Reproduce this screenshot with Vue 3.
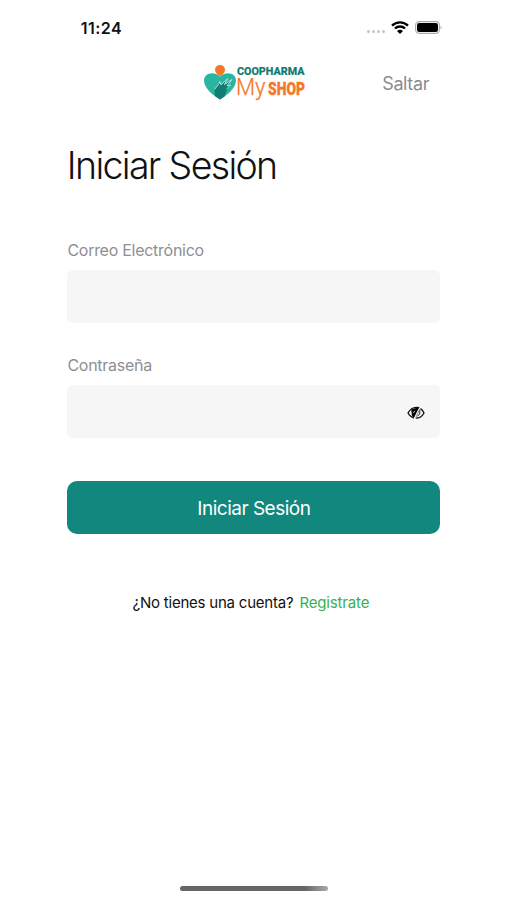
<script setup>
import { ref } from 'vue'

const email = ref('')
const password = ref('')
const hidden = ref(true)
</script>

<template>
  <main class="screen">
    <div class="status">
      <span class="time">11:24</span>
      <div class="indicators">
        <span class="dots"><i v-for="n in 4" :key="n"></i></span>
        <svg class="wifi" width="18" height="13" viewBox="0 0 18 13">
          <path d="M1 4.600C5.500.3 12.500.3 17 4.600M3.900 7.500c2.900-2.700 7.300-2.700 10.200 0" fill="none" stroke="#000" stroke-width="2.300" />
          <path d="M9 13 6 9.900c1.700-1.500 4.300-1.500 6 0z" fill="#000" />
        </svg>
        <svg class="battery" width="28" height="13" viewBox="0 0 28 13">
          <rect x=".6" y=".6" width="23.800" height="11.800" rx="3.600" fill="#fff" stroke="#aaa" stroke-width="1.100" />
          <rect x="2" y="2" width="21" height="9" rx="2.200" fill="#000" />
          <path d="M25.600 4.500q2 2 0 4z" fill="#aaa" />
        </svg>
      </div>
    </div>

    <header class="top">
      <svg class="logo" width="104" height="38" viewBox="0 0 104 38">
        <path d="M17 35.500C11.500 32 1 25 1 16.500C1 9 10.500 6.500 17 12.500C23.500 6.500 33 9 33 16.500C33 25 22.500 32 17 35.500z" fill="#2bb5a0" />
        <path d="M12 32C11 28 11.500 25 14 22.500L16.500 18L18.500 20.500L24.500 14.500L22.500 20L29 15.500L25 21.500L27.500 21.500L24 26L21.500 32.500L17 35.500Q14 33.800 12 32z" fill="#117c72" />
        <path d="M12.300 25C13 22.500 15.500 22 16.800 17.500L18 20.800L24.800 14.500L21.500 20.500L29 15.500L24 21.800L27.500 21L23.500 25.200" fill="none" stroke="#c5ebe2" stroke-width=".9" stroke-linejoin="round" />
        <path d="M17 12.300Q11.700 9.300 12 5.600Q12.500 1 17 1T22 5.600Q22.300 9.300 17 12.300z" fill="#f3782a" />
        <text x="34" y="11.300" class="name" textLength="67.500" lengthAdjust="spacingAndGlyphs">COOPHARMA</text>
        <text x="33" y="30.700" class="my" textLength="29.500" lengthAdjust="spacingAndGlyphs">My</text>
        <text x="65" y="31.200" class="shop" textLength="37" lengthAdjust="spacingAndGlyphs">SHOP</text>
      </svg>
      <a class="skip">Saltar</a>
    </header>

    <h1><span>Iniciar Sesión</span></h1>

    <form @submit.prevent>
      <label for="email">Correo Electrónico</label>
      <div class="field"><input id="email" v-model="email" type="email" /></div>
      <label for="password" class="second">Contraseña</label>
      <div class="field">
        <input id="password" v-model="password" :type="hidden ? 'password' : 'text'" />
        <button class="eye" type="button" @click="hidden = !hidden">
          <svg width="18" height="14" viewBox="0 0 18 14">
            <path d="M12 1.700C7.500.5 3.500 2.500 1 7C2 9 3.700 10.800 5.700 11.700M13.500 2.600C15.100 3.600 16.300 5.200 17 7C14.900 10.800 12.300 12.300 8.800 12.200" fill="none" stroke="#111" stroke-width="1.300" />
            <path d="M4.300 3.500 12.500.8 6.300 13 4.800 9z" fill="#000" />
            <path d="M12.800 4.300Q14 8.300 10.300 10.400" fill="none" stroke="#222" stroke-width="1" />
            <path d="M8.800 11.500 12.900 2.800" stroke="#777" stroke-width=".8" />
            <path d="M6.300 7 7.800 4.800" stroke="#f6f6f6" stroke-width=".8" />
          </svg>
        </button>
      </div>
      <button class="submit" type="submit"><span>Iniciar Sesión</span></button>
    </form>

    <p class="register"><span class="question">¿No tienes una cuenta?</span><a>Registrate</a></p>
    <div class="home"></div>
  </main>
</template>

<style>
body { margin: 0; background: #fff; }
</style>

<style scoped>
.screen {
  box-sizing: border-box;
  width: 507px;
  height: 900px;
  padding: 0 66.6px 0 67.4px;
  display: flex;
  flex-direction: column;
  overflow: hidden;
  background: #fff;
  color: #111;
  font-family: Inter, sans-serif;
}
.status {
  height: 55px;
  display: flex;
  align-items: center;
  justify-content: space-between;
  padding-left: 13.4px;
  margin-right: -2.4px;
}
.time { font-size: 16px; font-weight: 600; letter-spacing: 0.45px; }
.indicators { display: flex; align-items: center; }
.dots { display: flex; gap: 2px; margin: 8px 6px 0 0; }
.dots i { width: 3px; height: 3px; border-radius: 50%; background: #c4c4c4; }
.wifi { margin-right: 6px; }
.top {
  height: 56px;
  display: flex;
  align-items: center;
  justify-content: space-between;
  padding: 0 11.4px 0 135.6px;
}
.logo { display: block; overflow: visible; }
.name { font: 800 11.5px Roboto, sans-serif; fill: #117c72; stroke: #117c72; stroke-width: 0.2px; }
.my { font: 300 23.5px Roboto, sans-serif; fill: #f3782a; stroke: #f3782a; stroke-width: 0.25px; }
.shop { font: 900 18.5px Roboto, sans-serif; fill: #f3782a; stroke: #f3782a; stroke-width: 0.3px; }
.skip { color: #8c8b90; font-size: 18px; letter-spacing: -0.4px; }
h1 {
  margin: 30px 0 0;
  height: 50px;
  font-size: 37.5px;
  line-height: 50px;
  font-weight: 300;
  letter-spacing: -1.65px;
  text-indent: -0.6px;
  white-space: nowrap;
}
form { display: flex; flex-direction: column; margin-top: 49.4px; }
label {
  height: 20px;
  line-height: 20px;
  margin-bottom: 10px;
  color: #8f8e93;
  font-size: 16px;
  letter-spacing: -0.27px;
}
.second { margin-top: 32px; }
.field {
  height: 53px;
  display: flex;
  align-items: center;
  border-radius: 6px;
  background: #f6f6f6;
}
.field input {
  flex: 1;
  min-width: 0;
  height: 100%;
  box-sizing: border-box;
  padding: 0 16px;
  border: 0;
  outline: 0;
  background: transparent;
  font: 16px Inter, sans-serif;
}
.eye { padding: 0; margin: 3px 15.500px 0 0; border: 0; background: none; display: flex; }
.submit {
  margin: 43px 0 0;
  height: 53px;
  padding: 0;
  border: 0;
  border-radius: 10px;
  background: #12877e;
  color: #fff;
  font: 400 19px Inter, sans-serif;
  letter-spacing: -0.5px;
}
.submit span { display: inline-block; padding-top: 1px; }
.register {
  display: flex;
  justify-content: center;
  gap: 6px;
  height: 20px;
  margin: 58.6px 6px 0 0;
  font-size: 15px;
  line-height: 20px;
  letter-spacing: -0.22px;
  white-space: nowrap;
}
.register a { color: #35b152; letter-spacing: -0.15px; }
.home {
  width: 148px;
  height: 5px;
  margin: auto auto 9px 112.6px;
  border-radius: 3px;
  background: linear-gradient(90deg, #666 84%, #aaa);
}
</style>
